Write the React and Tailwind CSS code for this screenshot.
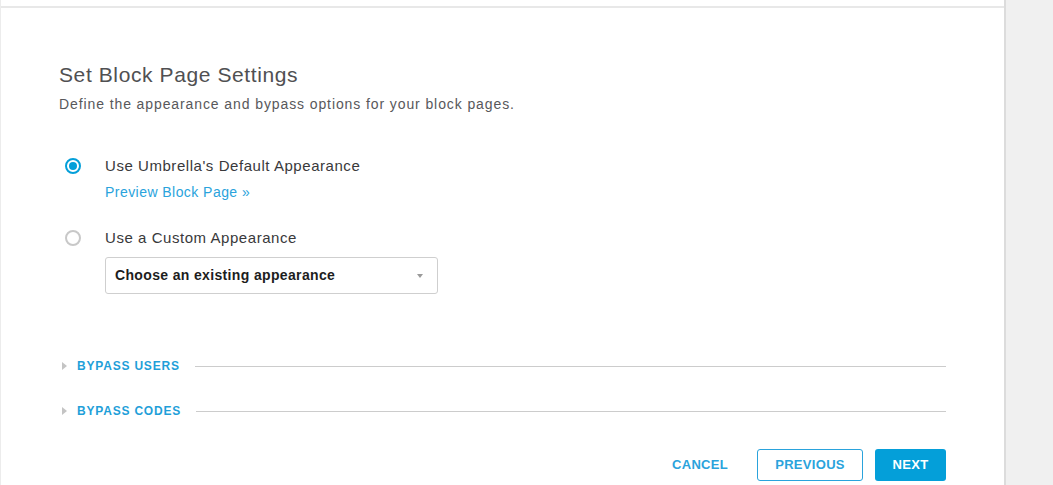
export default function App() {
  const font = { fontFamily: '"Liberation Sans", Arial, sans-serif' };

  return (
    <div className="flex h-[485px] w-[1053px] overflow-hidden bg-[#f0f0f0]" style={font}>
      <div className="flex w-[1006px] shrink-0 flex-col border-l border-r-2 border-l-[#ececec] border-r-[#dcdcdc] bg-white">
        <div className="mt-[6px] h-[2px] w-full bg-[#e8e8e8]" />

        <div className="px-[58px] pt-[55px]">
          <h1 className="text-[21px] leading-[24px] tracking-[0.6px] text-[#505052]">Set Block Page Settings</h1>
          <p className="mt-[7px] text-[14px] leading-[20px] tracking-[0.9px] text-[#58585b]">
            Define the appearance and bypass options for your block pages.
          </p>

          <div className="mt-[42px] flex items-center">
            <span className="ml-[6px] flex h-[16px] w-[16px] items-center justify-center rounded-full border-2 border-[#049fd9]">
              <span className="h-[8px] w-[8px] rounded-full bg-[#049fd9]" />
            </span>
            <span className="ml-[24px] text-[15px] leading-[20px] tracking-[0.55px] text-[#39393b]">Use Umbrella's Default Appearance</span>
          </div>
          <a className="ml-[46px] mt-[6px] block text-[14px] leading-[20px] tracking-[0.45px] text-[#2aa3dc]">Preview Block Page »</a>

          <div className="mt-[26px] flex items-center">
            <span className="ml-[6px] h-[16px] w-[16px] rounded-full border-2 border-[#c8c8c8]" />
            <span className="ml-[24px] text-[15px] leading-[20px] tracking-[0.55px] text-[#39393b]">Use a Custom Appearance</span>
          </div>
          <div className="ml-[46px] mt-[9px] flex h-[37px] w-[333px] items-center justify-between rounded-[3px] border border-[#cfcfcf] pl-[9px] pr-[14px]">
            <span className="text-[14px] font-bold tracking-[0.35px] text-[#1d1d1d]">Choose an existing appearance</span>
            <span className="h-0 w-0 border-x-[3.5px] border-t-[4px] border-x-transparent border-t-[#9a9a9a]" />
          </div>

          <div className="mt-[64px] flex items-center">
            <span className="ml-[3px] h-0 w-0 border-y-[4px] border-l-[5px] border-y-transparent border-l-[#c4c4c4]" />
            <span className="ml-[10px] text-[12px] font-bold leading-[16px] tracking-[0.8px] text-[#1f9fd9]">BYPASS USERS</span>
            <div className="ml-[15px] h-px flex-1 bg-[#cccccc]" />
          </div>
          <div className="mt-[29px] flex items-center">
            <span className="ml-[3px] h-0 w-0 border-y-[4px] border-l-[5px] border-y-transparent border-l-[#c4c4c4]" />
            <span className="ml-[10px] text-[12px] font-bold leading-[16px] tracking-[0.8px] text-[#1f9fd9]">BYPASS CODES</span>
            <div className="ml-[15px] h-px flex-1 bg-[#cccccc]" />
          </div>

          <div className="mt-[30px] flex items-center justify-end">
            <button className="mr-[29px] text-[13px] font-bold tracking-[0.3px] text-[#2aa3dc]">CANCEL</button>
            <button className="h-[32px] w-[106px] rounded-[3px] border border-[#2aa3dc] text-[13px] font-bold tracking-[0.3px] text-[#2aa3dc]">
              PREVIOUS
            </button>
            <button className="ml-[12px] h-[32px] w-[71px] rounded-[3px] bg-[#049fd9] text-[13px] font-bold tracking-[0.3px] text-white">
              NEXT
            </button>
          </div>
        </div>
      </div>
      <div className="flex-1" />
    </div>
  );
}
